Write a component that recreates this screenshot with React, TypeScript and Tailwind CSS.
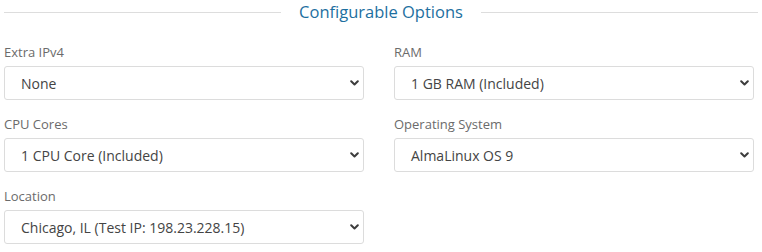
import React from 'react';

interface OptionField {
  label: string;
  value: string;
}

const fields: OptionField[] = [
  { label: 'Extra IPv4', value: 'None' },
  { label: 'RAM', value: '1 GB RAM (Included)' },
  { label: 'CPU Cores', value: '1 CPU Core (Included)' },
  { label: 'Operating System', value: 'AlmaLinux OS 9' },
  { label: 'Location', value: 'Chicago, IL (Test IP: 198.23.228.15)' },
];

const Chevron: React.FC = () => (
  <svg width="9" height="6" viewBox="0 0 9 6" className="shrink-0">
    <path d="M1.2 1.2 L4.5 4.5 L7.8 1.2" fill="none" stroke="#3c3c3c" strokeWidth="2" strokeLinecap="round" strokeLinejoin="round" />
  </svg>
);

const SelectBox: React.FC<OptionField> = ({ label, value }) => (
  <div className="flex flex-col">
    <label className="mb-[4px] h-[20px] text-[13px] leading-[20px] text-[#6b6b6b]">{label}</label>
    <div className="flex h-[34px] items-center justify-between rounded-[3px] border border-[#dcdcdc] bg-white pl-[16px] pr-[4px]">
      <span className="text-[14px] text-[#444]">{value}</span>
      <Chevron />
    </div>
  </div>
);

export default function App() {
  return (
    <div className="h-[252px] w-[762px] bg-white px-[4px] font-['Open_Sans',sans-serif]">
      <div className="flex h-[24px] items-center">
        <div className="h-px flex-1 bg-[#dddddd]" />
        <span className="mx-[18px] text-[16.5px] text-[#1d6fa0]">Configurable Options</span>
        <div className="h-px flex-1 bg-[#dddddd]" />
      </div>
      <div className="mt-[18px] grid w-[750px] grid-cols-2 gap-x-[30px] gap-y-[14px]">
        {fields.map((f) => (
          <SelectBox key={f.label} {...f} />
        ))}
      </div>
    </div>
  );
}
